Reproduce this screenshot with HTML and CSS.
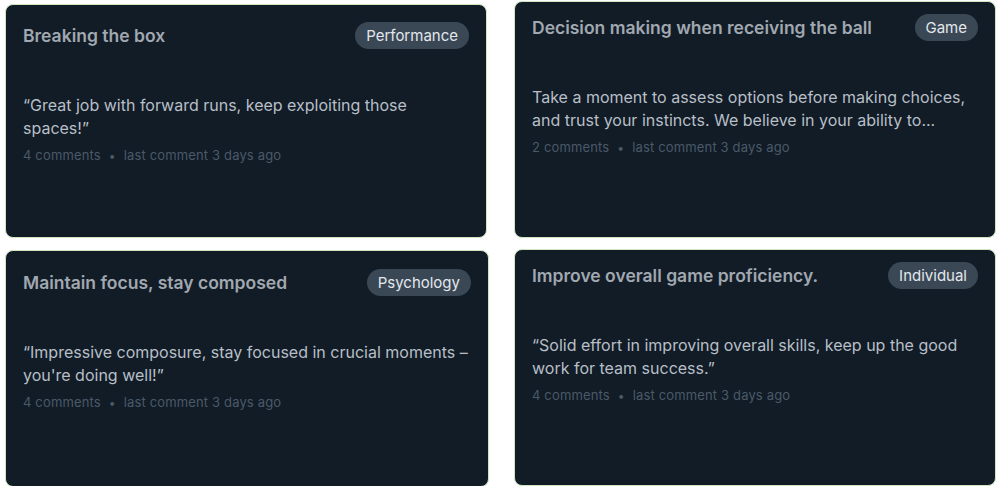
FILE: index.html
```html
<!DOCTYPE html>
<html lang="en">
<head>
  <meta charset="UTF-8">
  <title>Feedback</title>
  <link rel="stylesheet" href="styles.css">
</head>
<body>

<div class="board">
  <div class="card card-left card-first">
    <div class="card-head">
      <div class="title">Breaking the box</div>
      <span class="tag">Performance</span>
    </div>
    <p class="quote">“Great job with forward runs, keep exploiting those spaces!”</p>
    <div class="meta"><span>4 comments</span><span class="dot">•</span><span>last comment 3 days ago</span></div>
  </div>

  <div class="card card-right">
    <div class="card-head">
      <div class="title">Decision making when receiving the ball</div>
      <span class="tag">Game</span>
    </div>
    <p class="quote">Take a moment to assess options before making choices, and trust your instincts. We believe in your ability to...</p>
    <div class="meta"><span>2 comments</span><span class="dot">•</span><span>last comment 3 days ago</span></div>
  </div>

  <div class="card card-left card-third">
    <div class="card-head">
      <div class="title">Maintain focus, stay composed</div>
      <span class="tag">Psychology</span>
    </div>
    <p class="quote">“Impressive composure, stay focused in crucial moments – you're doing well!”</p>
    <div class="meta"><span>4 comments</span><span class="dot">•</span><span>last comment 3 days ago</span></div>
  </div>

  <div class="card card-right">
    <div class="card-head">
      <div class="title">Improve overall game proficiency.</div>
      <span class="tag">Individual</span>
    </div>
    <p class="quote">“Solid effort in improving overall skills, keep up the good work for team success.”</p>
    <div class="meta"><span>4 comments</span><span class="dot">•</span><span>last comment 3 days ago</span></div>
  </div>
</div>

</body>
</html>
```

FILE: styles.css
```css
/* ----- page ----- */
body {
  margin: 0;
  background: #fff;
  font-family: Inter, "Noto Sans", sans-serif;
}

.board {
  display: grid;
  grid-template-columns: 482px 482px;
  grid-auto-rows: 237px;
  column-gap: 27px;
  row-gap: 11px;
  padding: 1px 5px 0 5px;
}

/* ----- card ----- */
.card {
  box-sizing: border-box;
  background: #111c27;
  border: 1px solid #cfe6bf;
  border-radius: 8px;
  padding: 17px 17px 0 17px;
}
.card-right {
  padding-top: 12px;
}
.card-first {
  margin-top: 3px;
  height: 234px;
}
.card-third {
  width: 484px;
  margin-top: 1px;
  height: 237px;
  padding-top: 18px;
}

.card-head {
  display: flex;
  justify-content: space-between;
  align-items: center;
  height: 27px;
}

.title {
  font-size: 17.5px;
  font-weight: 600;
  color: #a1a8b0;
}

.tag {
  background: #3a4856;
  color: #e3e7eb;
  font-size: 15px;
  line-height: 27px;
  padding: 0 11px;
  border-radius: 14px;
}

.quote {
  margin: 45px 0 0;
  font-size: 16px;
  line-height: 23px;
  color: #b8bfc6;
}

.meta {
  margin-top: 6px;
  font-size: 13px;
  letter-spacing: 0.15px;
  line-height: 18px;
  color: #4b5967;
}
.dot {
  margin: 0 8px;
  font-size: 12px;
}
```
